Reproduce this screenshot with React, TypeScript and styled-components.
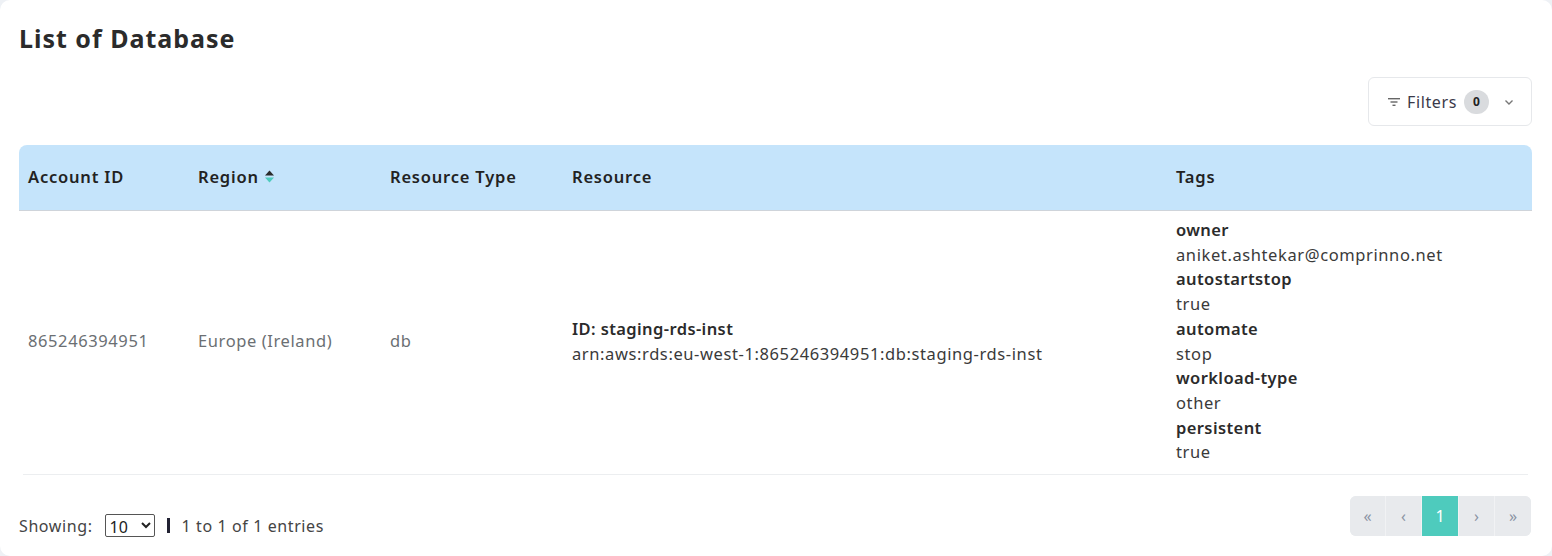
import React from "react";
import styled, { createGlobalStyle } from "styled-components";

const Global = createGlobalStyle`
  html, body { margin: 0; padding: 0; background: #eef1f5; }
  body { font-family: "Noto Sans", "Open Sans", sans-serif; color: #333; letter-spacing: 0.6px; }
  * { box-sizing: border-box; }
`;

const Card = styled.div`
  background: #fff;
  border-radius: 10px;
  width: 1552px;
  height: 556px;
  padding: 20px 20px 0 19px;
  display: flex;
  flex-direction: column;
`;

const Title = styled.h1`
  margin: 0;
  font-size: 25px;
  font-weight: 700;
  color: #2b2b2b;
  line-height: 36px;
  letter-spacing: 1px;
`;

const Toolbar = styled.div`
  display: flex;
  justify-content: flex-end;
  margin-top: 21px;
`;

const FilterButton = styled.button`
  height: 49px;
  width: 164px;
  border: 1px solid #e6e8eb;
  border-radius: 6px;
  background: #fff;
  display: flex;
  align-items: center;
  justify-content: center;
  gap: 6px;
  font-family: inherit;
  font-size: 16px;
  letter-spacing: 0.6px;
  color: #3a3a4a;
  padding: 0 0 0 2px;
`;

const Badge = styled.span`
  background: #d9dbde;
  border-radius: 12px;
  min-width: 25px;
  height: 24px;
  display: inline-flex;
  align-items: center;
  justify-content: center;
  font-size: 12px;
  font-weight: 700;
  letter-spacing: 0;
  color: #222;
  margin-left: 1px;
`;

const Table = styled.div`
  margin-top: 19px;
  width: 1513px;
`;

const HeadRow = styled.div`
  display: grid;
  grid-template-columns: 170px 192px 182px 604px 1fr;
  height: 66px;
  background: #c5e4fb;
  border-radius: 8px 8px 0 0;
  border-bottom: 1px solid #cfd4da;
  align-items: center;
`;

const HeadCell = styled.div`
  padding-left: 9px;
  padding-bottom: 2px;
  font-size: 16.5px;
  font-weight: 600;
  letter-spacing: 0.8px;
  color: #222;
  display: flex;
  align-items: center;
  gap: 5px;
`;

const BodyRow = styled.div`
  display: grid;
  grid-template-columns: 166px 192px 182px 604px 1fr;
  align-items: center;
  padding: 7px 0 9px;
  margin: 0 4px;
  border-bottom: 1px solid #eceef0;
`;

const Cell = styled.div<{ $muted?: boolean; $first?: boolean }>`
  padding-left: ${(p) => (p.$first ? "5px" : "9px")};
  font-size: 16.5px;
  color: ${(p) => (p.$muted ? "#6b6f73" : "#3a3a3a")};
  line-height: 24.7px;
`;

const Bold = styled.div`
  font-weight: 600;
  letter-spacing: 0.4px;
  color: #2b2b2b;
`;

const Footer = styled.div`
  display: flex;
  justify-content: space-between;
  align-items: flex-start;
  margin-top: 21px;
`;

const Showing = styled.div`
  display: flex;
  align-items: center;
  font-size: 16px;
  color: #444;
  gap: 12px;
  padding-top: 18px;
`;

const Select = styled.select`
  font-family: inherit;
  font-size: 16px;
  height: 23px;
  width: 50px;
  border: 1px solid #555;
  border-radius: 2px;
  background: #fff;
  color: #222;
`;

const Divider = styled.span`
  width: 3px;
  height: 15px;
  background: #223;
`;

const Pager = styled.div`
  display: flex;
  height: 40px;
  border-radius: 6px;
  overflow: hidden;
  background: #e8eaed;
  margin-right: 1px;
`;

const PageBtn = styled.div<{ $active?: boolean }>`
  width: ${(p) => (p.$active ? "37px" : "36px")};
  display: flex;
  align-items: center;
  justify-content: center;
  font-size: 16px;
  letter-spacing: 0;
  color: ${(p) => (p.$active ? "#fff" : "#8a93a3")};
  background: ${(p) => (p.$active ? "#4ecbbd" : "#e8eaed")};
  border-right: 1px solid #f1f2f4;
  &:last-child { border-right: none; }
`;

const SortIcon = () => (
  <svg width="11" height="15" viewBox="0 0 11 15">
    <path d="M1 6.5 L5.5 1.5 L10 6.5 Z" fill="#2b2b2b" />
    <path d="M1 8.5 L5.5 13.5 L10 8.5 Z" fill="#4ecbbd" />
  </svg>
);

const FilterIcon = () => (
  <svg width="14" height="12" viewBox="0 0 14 12">
    <rect x="1" y="2" width="12" height="1.4" fill="#666" />
    <rect x="3.5" y="5.3" width="7" height="1.4" fill="#666" />
    <rect x="5.5" y="8.6" width="3" height="1.4" fill="#666" />
  </svg>
);

const Chevron = () => (
  <svg width="12" height="12" viewBox="0 0 12 12" style={{ marginLeft: 8 }}>
    <path d="M2.5 4.5 L6 8 L9.5 4.5" stroke="#777" strokeWidth="1.4" fill="none" />
  </svg>
);

const tags: [string, string][] = [
  ["owner", "aniket.ashtekar@comprinno.net"],
  ["autostartstop", "true"],
  ["automate", "stop"],
  ["workload-type", "other"],
  ["persistent", "true"],
];

export default function App() {
  return (
    <>
      <Global />
      <Card>
        <Title>List of Database</Title>
        <Toolbar>
          <FilterButton>
            <FilterIcon />
            Filters
            <Badge>0</Badge>
            <Chevron />
          </FilterButton>
        </Toolbar>
        <Table>
          <HeadRow>
            <HeadCell>Account ID</HeadCell>
            <HeadCell>
              Region <SortIcon />
            </HeadCell>
            <HeadCell>Resource Type</HeadCell>
            <HeadCell>Resource</HeadCell>
            <HeadCell>Tags</HeadCell>
          </HeadRow>
          <BodyRow>
            <Cell $muted $first>865246394951</Cell>
            <Cell $muted>Europe (Ireland)</Cell>
            <Cell $muted>db</Cell>
            <Cell>
              <Bold>ID: staging-rds-inst</Bold>
              arn:aws:rds:eu-west-1:865246394951:db:staging-rds-inst
            </Cell>
            <Cell>
              {tags.map(([k, v]) => (
                <React.Fragment key={k}>
                  <Bold>{k}</Bold>
                  <div>{v}</div>
                </React.Fragment>
              ))}
            </Cell>
          </BodyRow>
        </Table>
        <Footer>
          <Showing>
            Showing:
            <Select defaultValue="10">
              <option>10</option>
              <option>25</option>
            </Select>
            <Divider />
            1 to 1 of 1 entries
          </Showing>
          <Pager>
            <PageBtn>«</PageBtn>
            <PageBtn>‹</PageBtn>
            <PageBtn $active>1</PageBtn>
            <PageBtn>›</PageBtn>
            <PageBtn>»</PageBtn>
          </Pager>
        </Footer>
      </Card>
    </>
  );
}
